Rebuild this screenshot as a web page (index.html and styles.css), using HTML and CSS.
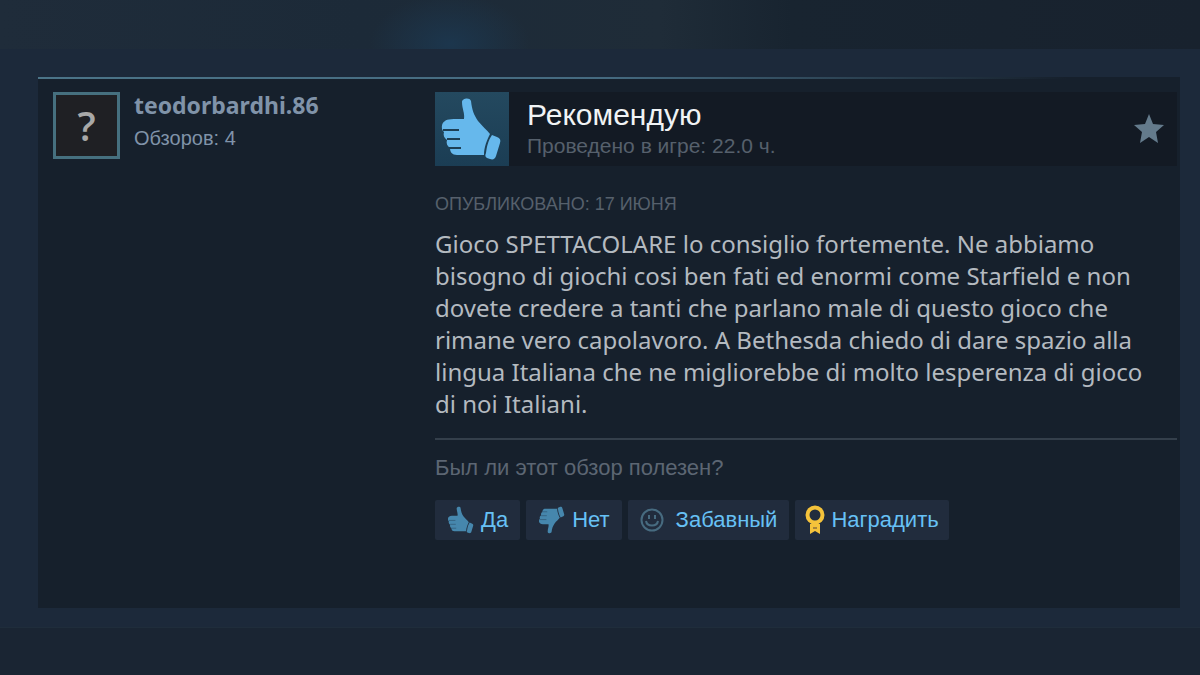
FILE: index.html
```html
<!DOCTYPE html>
<html lang="ru">
<head>
    <meta charset="UTF-8">
    <meta name="viewport" content="width=device-width, initial-scale=1.0">
    <title>Обзор</title>
    <link rel="stylesheet" href="styles.css">
</head>
<body>
    <svg class="sprite" aria-hidden="true">
        <symbol id="thumb" viewBox="0 0 74 74">
            <path d="M27 10c0-4 8-5 9-1 1 9 3 14 7 20 4 5 9 9 12 13-3 6-6 13-6 21H22c-5 0-7-3-7-7-3-2-4-5-3-8-3-2-4-5-3-8-3-2-3-9 1-11 2-2 8-2 19-2 1-6-2-10-2-17z"/>
            <path d="M57 43l5 2c3 1 4 3 3 6l-4 13c-1 3-3 4-6 3l-3-1c-2-1-2-3-1-5 1-7 2-12 6-18z"/>
            <path class="fingers" d="M8 38h16M12 47h13M14 56h12"/>
        </symbol>
    </svg>

    <div class="strip-top"></div>
    <main class="page">
        <article class="review">
            <div class="author">
                <a class="avatar" href="#" aria-label="teodorbardhi.86">?</a>
                <div class="author-info">
                    <a class="author-name" href="#">teodorbardhi.86</a>
                    <a class="author-reviews" href="#">Обзоров: 4</a>
                </div>
            </div>
            <div class="content">
                <header class="verdict">
                    <svg class="verdict-icon"><use href="#thumb"/></svg>
                    <div class="verdict-text">
                        <h1>Рекомендую</h1>
                        <p>Проведено в игре: 22.0 ч.</p>
                    </div>
                    <svg class="star" viewBox="0 0 32 32"><path d="M16 1l4 10 11 1-8 7 2 11-9-6-9 6 2-11-8-7 11-1z"/></svg>
                </header>
                <p class="posted">ОПУБЛИКОВАНО: 17 ИЮНЯ</p>
                <p class="text">Gioco SPETTACOLARE lo consiglio fortemente. Ne abbiamo bisogno di giochi cosi ben fati ed enormi come Starfield e non dovete credere a tanti che parlano male di questo gioco che rimane vero capolavoro. A Bethesda chiedo di dare spazio alla lingua Italiana che ne migliorebbe di molto lesperenza di gioco di noi Italiani.</p>
                <footer class="feedback">
                    <p>Был ли этот обзор полезен?</p>
                    <div class="buttons">
                        <button type="button"><svg class="icon"><use href="#thumb"/></svg>Да</button>
                        <button type="button"><svg class="icon icon-down"><use href="#thumb"/></svg>Нет</button>
                        <button type="button" class="funny">
                            <svg class="smile" viewBox="0 0 24 24"><circle cx="12" cy="12" r="10.5"/><path d="M6 13c1 6 11 6 12 0M9 7v4M15 7v4"/></svg>Забавный
                        </button>
                        <button type="button" class="award">
                            <svg class="medal" viewBox="0 0 20 30"><circle cx="10" cy="10" r="7.5"/><path d="M5 19h10v10l-5-3-5 3z"/><path class="fold" d="M8 23h4"/></svg>Наградить
                        </button>
                    </div>
                </footer>
            </div>
        </article>
    </main>
    <div class="strip-bottom"></div>
</body>
</html>
```
FILE: styles.css
```css
* {
    box-sizing: border-box;
}
body {
    margin: 0;
    min-height: 100vh;
    display: flex;
    flex-direction: column;
    background: #1b2838;
    font-family: "Liberation Sans", Arial, sans-serif;
}
h1, p {
    margin: 0;
    font-weight: 400;
}
a {
    text-decoration: none;
}
.sprite {
    position: absolute;
    width: 0;
    height: 0;
}
.strip-top {
    height: 49px;
    background:
        radial-gradient(ellipse 80px 50px at 37.5% 90%, #1c364d, transparent),
        linear-gradient(90deg, #1f2c3a, #1c2a38 30%, #1f2c38 55%, #182430 66%, #18222e);
}
.strip-bottom {
    flex: 1;
    min-height: 48px;
    border-top: 1px solid #1f2d3b;
    background: #1a2533;
}
.page {
    padding: 28px 20px 19px 38px;
    background: #1c293a;
}
.review {
    display: flex;
    min-height: 531px;
    padding: 13px 3px 24px 15px;
    background: #16202c;
    border-top: 2px solid;
    border-image: linear-gradient(90deg, #4b7488, #456a80 50%, #16202c 90%) 1;
}
.author {
    display: flex;
    flex: 0 0 382px;
    gap: 14px;
}
.avatar {
    width: 67px;
    height: 67px;
    border: 3px solid #46707f;
    background: #1f2024;
    color: #a8a8a8;
    font: 600 40px/62px "Open Sans", sans-serif;
    text-align: center;
}
.author-info {
    display: flex;
    flex-direction: column;
}
.author-name {
    color: #8093a9;
    font: 700 23px/26px "Noto Sans", sans-serif;
}
.author-reviews {
    margin-top: 6px;
    color: #8093a9;
    font-size: 20px;
    line-height: 28px;
}
.content {
    flex: 1;
    min-width: 0;
}
.verdict {
    display: flex;
    align-items: center;
    padding-right: 12px;
    background: #131a24;
}
.verdict-icon {
    --line: #1d3f55;
    width: 74px;
    height: 74px;
    background: linear-gradient(#24495f, #1b3d54);
    fill: #66b8ec;
}
.fingers {
    stroke: var(--line);
    stroke-width: 2;
}
.verdict-text {
    flex: 1;
    margin-left: 18px;
}
.verdict h1 {
    color: #f0f3f5;
    font-size: 30px;
    line-height: 34px;
}
.verdict p {
    color: #56606c;
    font-size: 21px;
    line-height: 28px;
}
.star {
    width: 32px;
    height: 32px;
    fill: #647b8c;
}
.posted {
    margin-top: 26px;
    color: #56606c;
    font-size: 18px;
    line-height: 24px;
}
.text {
    margin-top: 12px;
    padding: 0 24px 18px 0;
    border-bottom: 2px solid #343f4b;
    color: #b4bac0;
    font: 24px/32px "Noto Sans", sans-serif;
}
.feedback p {
    margin-top: 16px;
    color: #5c6673;
    font-size: 22px;
    line-height: 24px;
}
.buttons {
    display: flex;
    flex-wrap: wrap;
    gap: 6px;
    margin-top: 20px;
}
button {
    display: flex;
    align-items: center;
    height: 40px;
    padding: 0 12px 0 10px;
    border: 0;
    border-radius: 2px;
    background: #212c3d;
    color: #67c1f5;
    font: 22px/40px "Liberation Sans", Arial, sans-serif;
    cursor: pointer;
}
.icon {
    --line: #34617f;
    width: 32px;
    height: 32px;
    margin-right: 4px;
    fill: #4687ad;
}
.icon-down {
    transform: scaleY(-1);
}
.smile {
    width: 24px;
    height: 24px;
    margin-right: 12px;
    fill: none;
    stroke: #476b80;
    stroke-width: 2;
}
.funny {
    padding: 0 12px;
}
.award {
    padding: 0 10px;
}
.medal {
    width: 20px;
    height: 30px;
    margin-right: 6px;
    fill: none;
    stroke: #f5c33b;
    stroke-width: 4;
}
.medal path {
    fill: #f5c33b;
    stroke: none;
}
.medal .fold {
    stroke: #a8853a;
    stroke-width: 2;
}
```
